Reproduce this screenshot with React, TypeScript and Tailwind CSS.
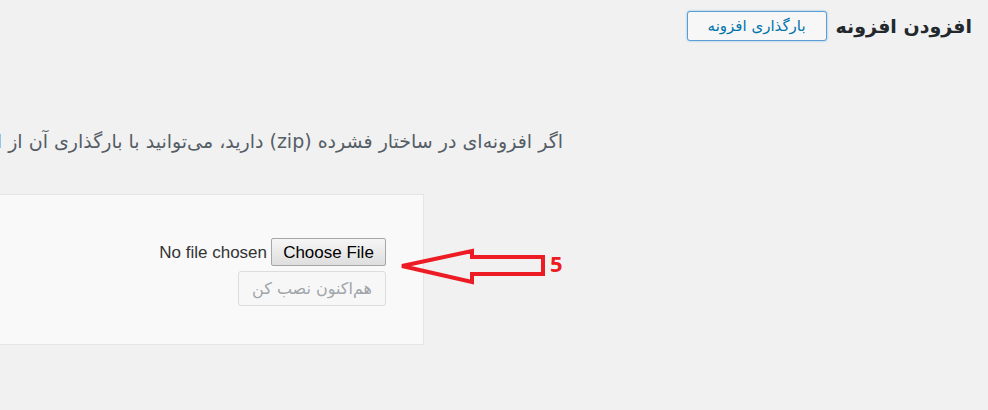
import React from "react";

const fa = { fontFamily: '"DejaVu Sans", sans-serif' };
const en = { fontFamily: '"Liberation Sans", Arial, sans-serif' };

const Arrow = () => (
    <svg className="absolute left-[396px] top-[246px]" width="176" height="42" viewBox="396 246 176 42">
        <polygon
            points="402,266 472,251 472,257 543,257 543,274 472,274 472,282"
            fill="none"
            stroke="#ed1c24"
            strokeWidth="4"
            strokeLinejoin="miter"
        />
    </svg>
);

export default function App() {
    return (
        <div dir="rtl" className="relative w-[988px] h-[410px] overflow-hidden bg-[#f1f1f1]">
            {/* page header */}
            <div className="flex items-center gap-[9px] pr-[16px] pt-[11px]">
                <h1 style={fa} className="text-[19px] font-bold text-[#23282d] leading-none">افزودن افزونه</h1>
                <button
                    style={fa}
                    className="w-[140px] h-[30px] rounded-[3px] border border-[#5b9dd9] bg-[#f7f7f7] text-[15px] text-[#0073aa] leading-none shadow-[0_0_2px_rgba(30,140,190,0.6)]"
                >
                    بارگذاری افزونه
                </button>
            </div>

            {/* upload section */}
            <p style={fa} className="mt-[87px] mr-[425px] whitespace-nowrap text-[19px] text-[#555d66] leading-[26px]">
                اگر افزونه‌ای در ساختار فشرده (zip) دارید، می‌توانید با بارگذاری آن از اینجا، آن را نصب یا بروزرسانی کنید.
            </p>

            <div className="mt-[40px] mr-[564px] w-[600px] h-[151px] border border-[#e5e5e5] bg-[#f9f9f9]">
                <div className="flex flex-col items-start pr-[37px] pt-[43px]">
                    <div className="flex items-center gap-[4px]">
                        <button
                            style={en}
                            className="w-[115px] h-[28px] border border-[#a6a6a6] rounded-[2px] bg-gradient-to-b from-[#f6f6f6] to-[#dedede] text-[17px] text-black leading-none"
                        >
                            Choose File
                        </button>
                        <span style={en} className="text-[17px] text-[#333] leading-none">No file chosen</span>
                    </div>
                    <button
                        style={fa}
                        disabled
                        className="mt-[5px] w-[148px] h-[35px] rounded-[3px] border border-[#dddddd] bg-[#f7f7f7] text-[16px] text-[#a0a5aa] leading-none"
                    >
                        هم‌اکنون نصب کن
                    </button>
                </div>
            </div>

            <Arrow />
            <span
                style={{ fontFamily: '"Open Sans", sans-serif' }}
                className="absolute left-[550px] top-[249px] text-[22px] font-bold text-[#ed1c24] leading-[28px]"
            >
                5
            </span>
        </div>
    );
}
